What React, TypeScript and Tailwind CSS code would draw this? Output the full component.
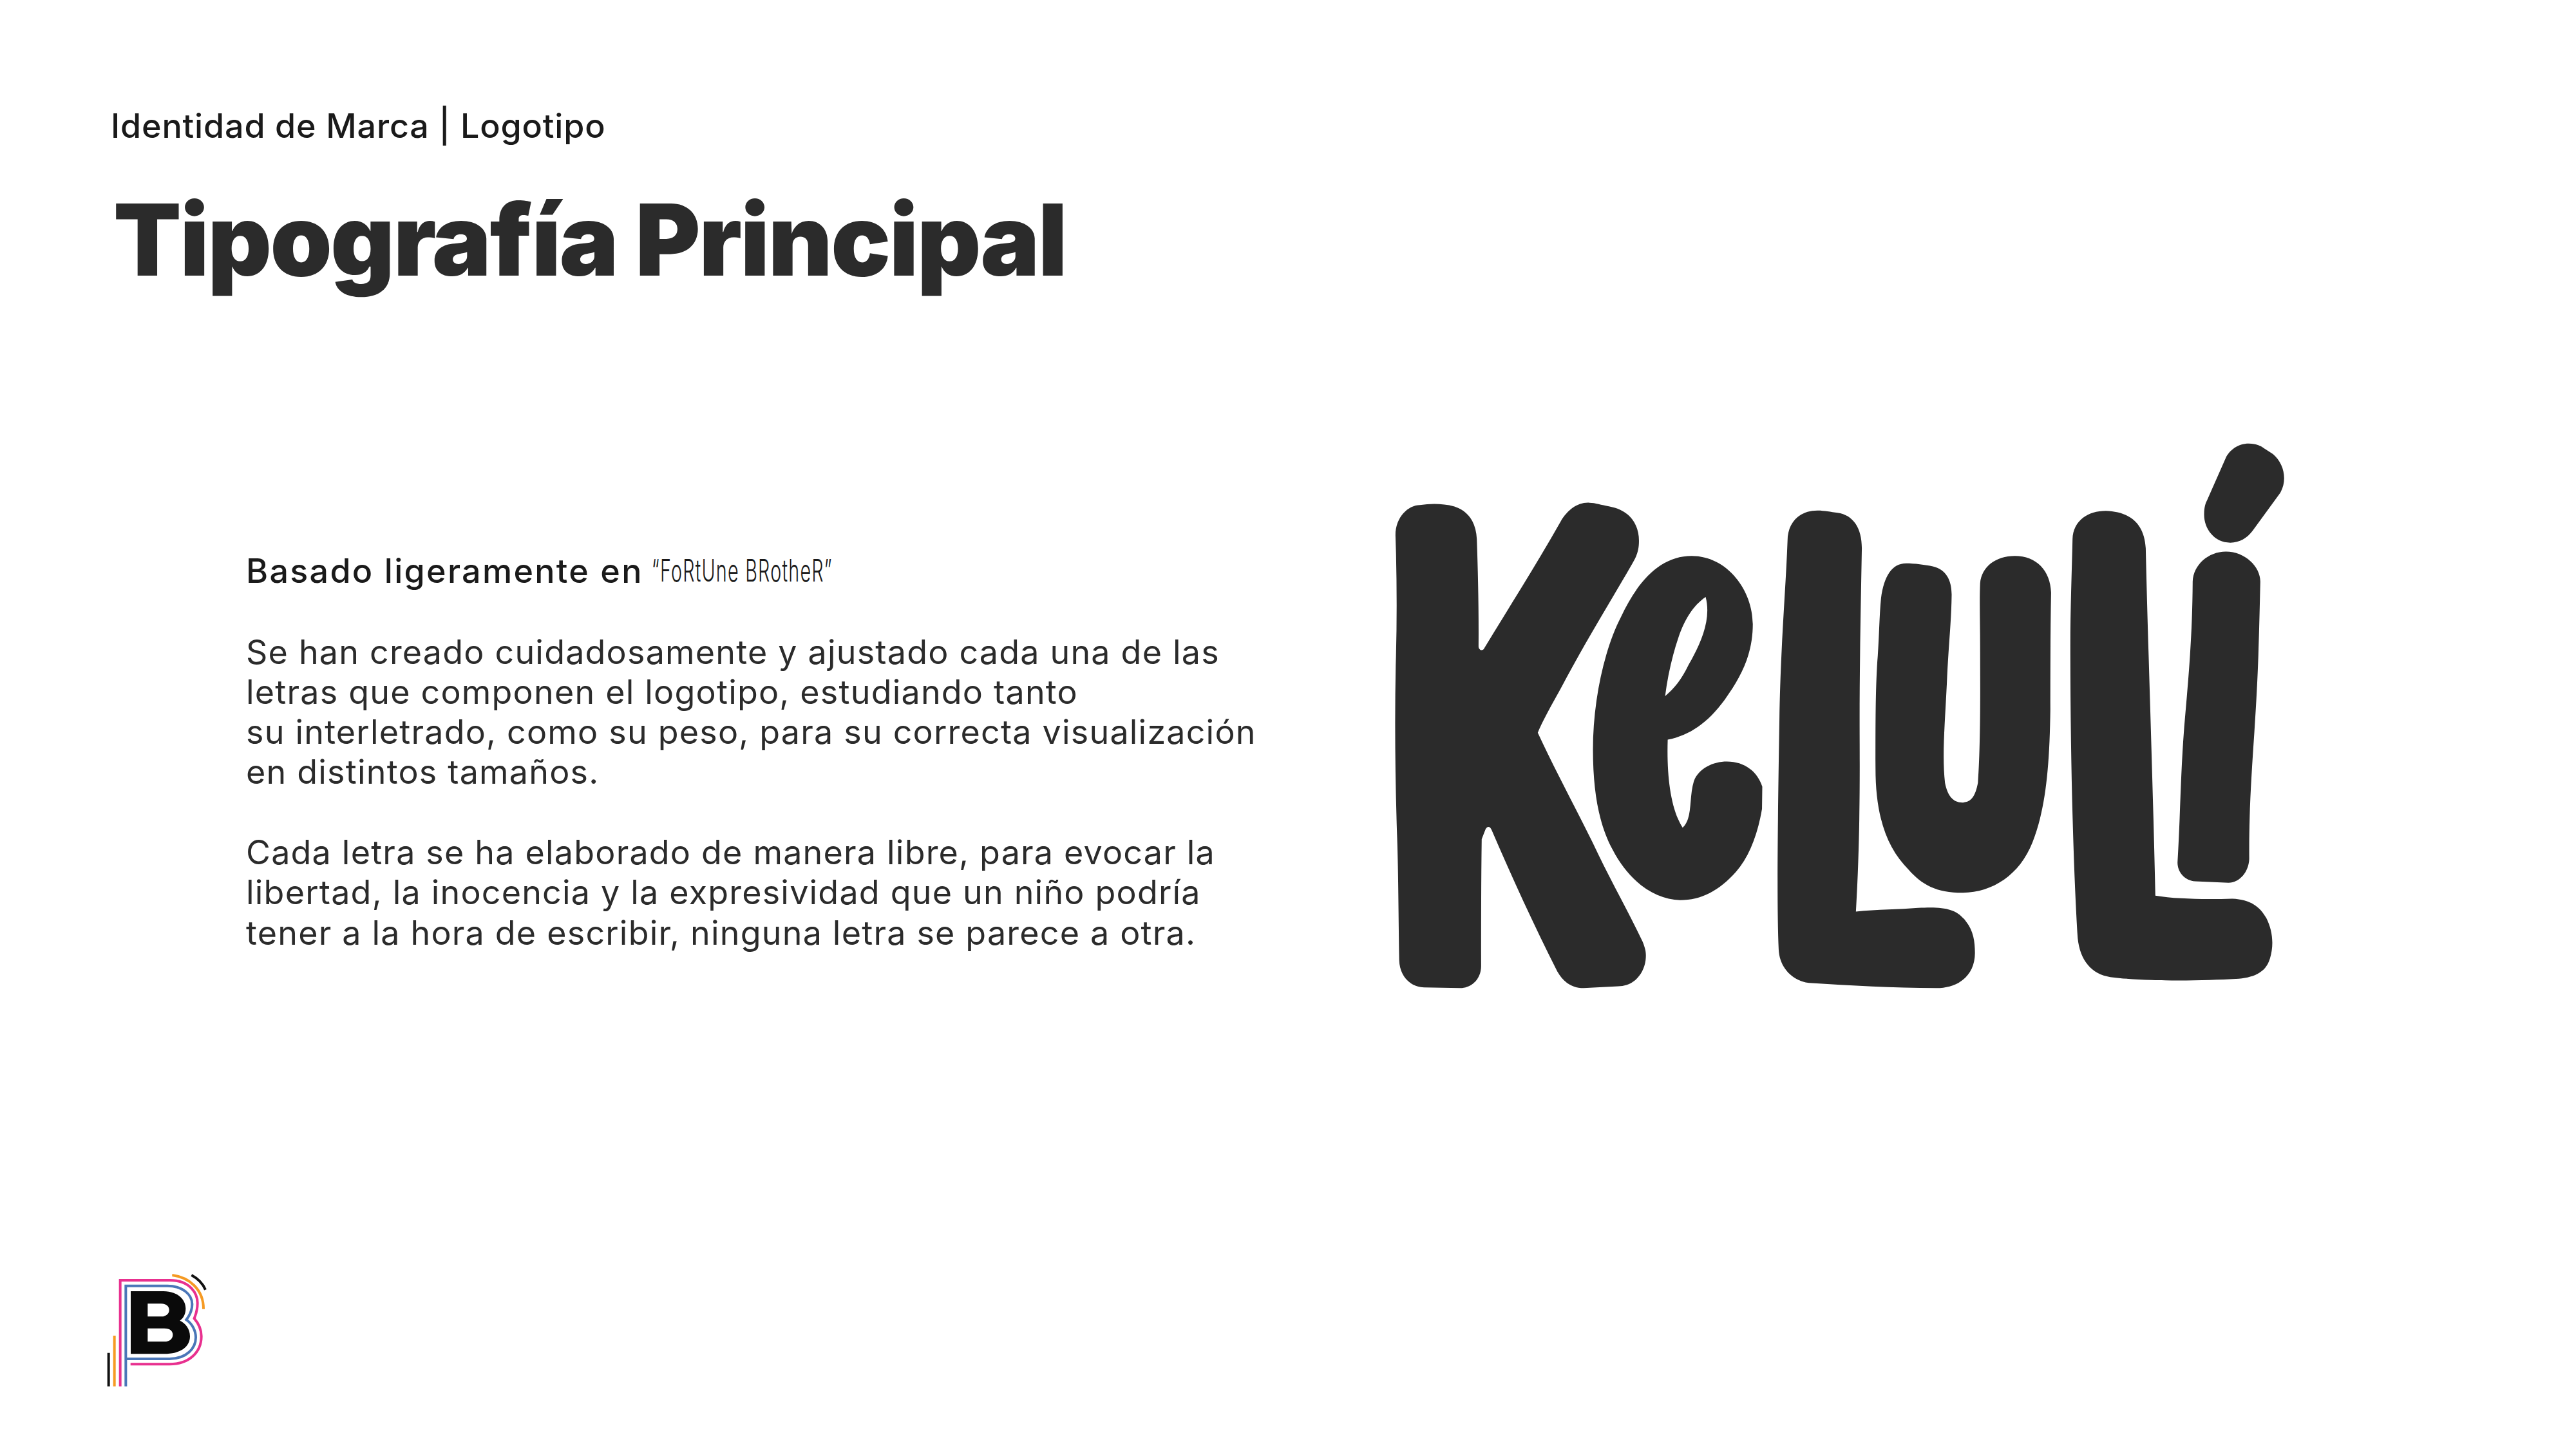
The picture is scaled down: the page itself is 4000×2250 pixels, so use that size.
export default function App() {
  return (
    <div className="w-[4000px] h-[2250px] bg-white text-[#2b2b2b] font-['Inter',sans-serif] flex flex-col overflow-hidden">
      <header className="pl-[172px] pt-[162px]">
        <p className="text-[52px] leading-[68px] font-medium text-[#1a1a1a] tracking-[0.85px]">Identidad de Marca | Logotipo</p>
        <h1 className="text-[154px] leading-[180px] font-black mt-[52px] ml-[4px] tracking-[-2.4px]">Tipografía Principal</h1>
      </header>
      <main className="flex mt-[219px] pl-[382px]">
        <div className="w-[1778px] pt-[175px] text-[52px] leading-[62.3px] tracking-[1.2px]">
          <p className="font-medium text-[#1a1a1a] tracking-[2.3px] whitespace-nowrap">
            Basado ligeramente en{" "}
            <span className="inline-block origin-left scale-x-[0.6] font-['Inter',sans-serif] font-light text-[48px] tracking-[2px] -ml-[3px] -translate-y-[2px]">“FoRtUne BRotheR”</span>
          </p>
          <p className="mt-[62.3px]">
            Se han creado cuidadosamente y ajustado cada una de las<br />
            letras que componen el logotipo, estudiando tanto<br />
            su interletrado, como su peso, para su correcta visualización<br />
            en distintos tamaños.
          </p>
          <p className="mt-[62.3px]">
            Cada letra se ha elaborado de manera libre, para evocar la<br />
            libertad, la inocencia y la expresividad que un niño podría<br />
            tener a la hora de escribir, ninguna letra se parece a otra.
          </p>
        </div>
        <svg viewBox="2160 682 1400 860" className="w-[1400px] h-[860px] shrink-0" fill="#2b2b2b">
          <g transform="translate(2120 660) scale(0.4464 0.574)">
            <path d="M105 300 C105 250 150 218 190 218 C230 214 270 214 310 222 C360 235 385 265 388 310 C392 400 395 500 394 600 C394 610 408 616 415 604 C500 495 590 385 680 262 C705 230 740 210 780 212 C800 212 820 218 850 222 C920 232 952 270 952 315 C952 340 945 355 930 375 C860 470 780 570 700 685 C660 745 630 780 600 834 C660 935 730 1035 790 1130 C850 1230 910 1310 965 1400 C975 1420 978 1430 975 1450 C968 1490 930 1520 880 1520 L760 1525 C720 1525 690 1510 668 1480 C590 1360 510 1225 440 1098 C434 1086 424 1086 418 1096 L405 1122 C403 1230 403 1350 403 1465 C403 1500 370 1525 330 1525 L205 1523 C160 1523 120 1495 118 1450 C115 1300 115 1200 110 1100 C104 950 102 800 106 650 C110 550 110 450 107 350 Z" />
            <path fillRule="evenodd" d="M1135 356 C1260 356 1348 450 1348 540 C1348 620 1310 680 1250 745 C1190 808 1130 840 1052 853 C1048 950 1062 1040 1104 1091 C1140 1065 1125 1010 1143 965 C1160 930 1210 912 1258 912 C1320 912 1365 940 1381 980 L1380 1040 C1365 1110 1335 1170 1290 1210 C1230 1262 1170 1287 1095 1287 C1010 1285 920 1240 860 1150 C815 1085 792 1000 792 880 C792 750 830 610 890 520 C950 420 1030 356 1135 356 Z M1184 467 C1140 490 1110 530 1090 575 C1068 625 1052 680 1043 735 C1075 715 1100 690 1125 650 C1165 595 1205 530 1184 467 Z" />
          </g>
          <g transform="translate(2720 660) scale(0.574)">
            <path d="M97 315 C97 265 130 232 180 233 C195 233 215 237 232 239 C275 245 298 280 298 335 C295 500 292 650 292 800 C292 900 295 1100 282 1318 C340 1312 400 1312 450 1308 C520 1304 555 1310 580 1345 C600 1370 604 1400 604 1430 C604 1490 560 1525 500 1525 C380 1525 270 1518 155 1511 C110 1505 75 1470 73 1420 C68 1300 70 1100 75 800 C78 600 92 450 97 315 Z" />
            <path d="M418 376 C440 376 470 380 490 384 C525 392 541 420 541 460 C540 540 532 600 528 700 C522 820 515 900 523 970 C530 1005 545 1023 570 1023 C595 1022 605 1005 612 970 C620 860 618 700 618 600 C618 540 616 480 618 430 C622 385 660 356 712 356 C770 356 808 395 810 455 C808 560 808 680 808 770 C806 930 795 1040 760 1130 C725 1220 650 1267 570 1267 C500 1267 460 1245 425 1205 C365 1145 335 1060 335 930 C335 800 335 720 340 640 C345 580 345 520 350 470 C358 410 380 376 418 376 Z" />
            <path d="M868 310 C870 260 910 234 958 234 C1020 236 1062 265 1066 335 C1072 600 1085 950 1092 1275 C1150 1285 1240 1285 1300 1283 C1350 1285 1375 1305 1392 1335 C1410 1370 1413 1410 1402 1445 C1390 1485 1355 1497 1310 1500 C1220 1505 1070 1508 970 1495 C920 1488 888 1450 882 1390 C870 1200 862 900 862 600 C862 500 866 400 868 310 Z" />
            <path d="M1283 344 C1335 344 1376 385 1376 425 C1372 600 1370 680 1360 830 C1352 950 1345 1050 1346 1175 C1345 1210 1320 1240 1290 1240 L1200 1236 C1170 1234 1152 1210 1152 1185 C1160 1050 1160 950 1170 820 C1185 650 1192 560 1193 425 C1195 380 1235 344 1283 344 Z" />
            <path d="M1345 52 C1365 52 1380 60 1385 64 L1410 80 C1440 105 1450 150 1430 185 L1355 288 C1340 308 1320 320 1295 320 C1250 320 1222 280 1224 240 C1224 225 1228 212 1232 205 L1282 92 C1292 70 1315 52 1345 52 Z" />
          </g>
        </svg>
      </main>
      <footer className="mt-auto pl-[140px] pb-[90px]">
        <svg viewBox="0 0 630 600" className="w-[210px] h-[200px] block" fill="none" strokeWidth="12">
          <path stroke="#e8308f" d="M140 578 V84 H370 C470 84 500 150 500 190 C500 225 490 250 485 262 C505 285 518 310 518 345 C518 420 460 475 370 475 H188" />
          <path stroke="#4a76b8" d="M166 578 V110 H360 C430 110 475 150 475 195 C475 225 462 250 448 268 C475 285 492 320 492 350 C492 400 450 450 370 450 H166" />
          <path stroke="#f59a23" d="M382 60 C460 70 528 125 528 218 M113 342 V578" />
          <path stroke="#111111" d="M472 60 C500 75 525 100 537 128 M86 422 V578" />
          <path fill="#0a0a0a" fillRule="evenodd" d="M189 135 H340 C410 135 445 175 445 215 C445 245 432 262 418 272 C445 285 465 310 465 345 C465 395 420 427 345 427 H189 Z M268 193 V253 H330 C355 253 368 240 368 223 C368 205 355 193 330 193 Z M268 308 V370 H345 C372 370 385 355 385 338 C385 320 372 308 345 308 Z" />
        </svg>
      </footer>
    </div>
  );
}
